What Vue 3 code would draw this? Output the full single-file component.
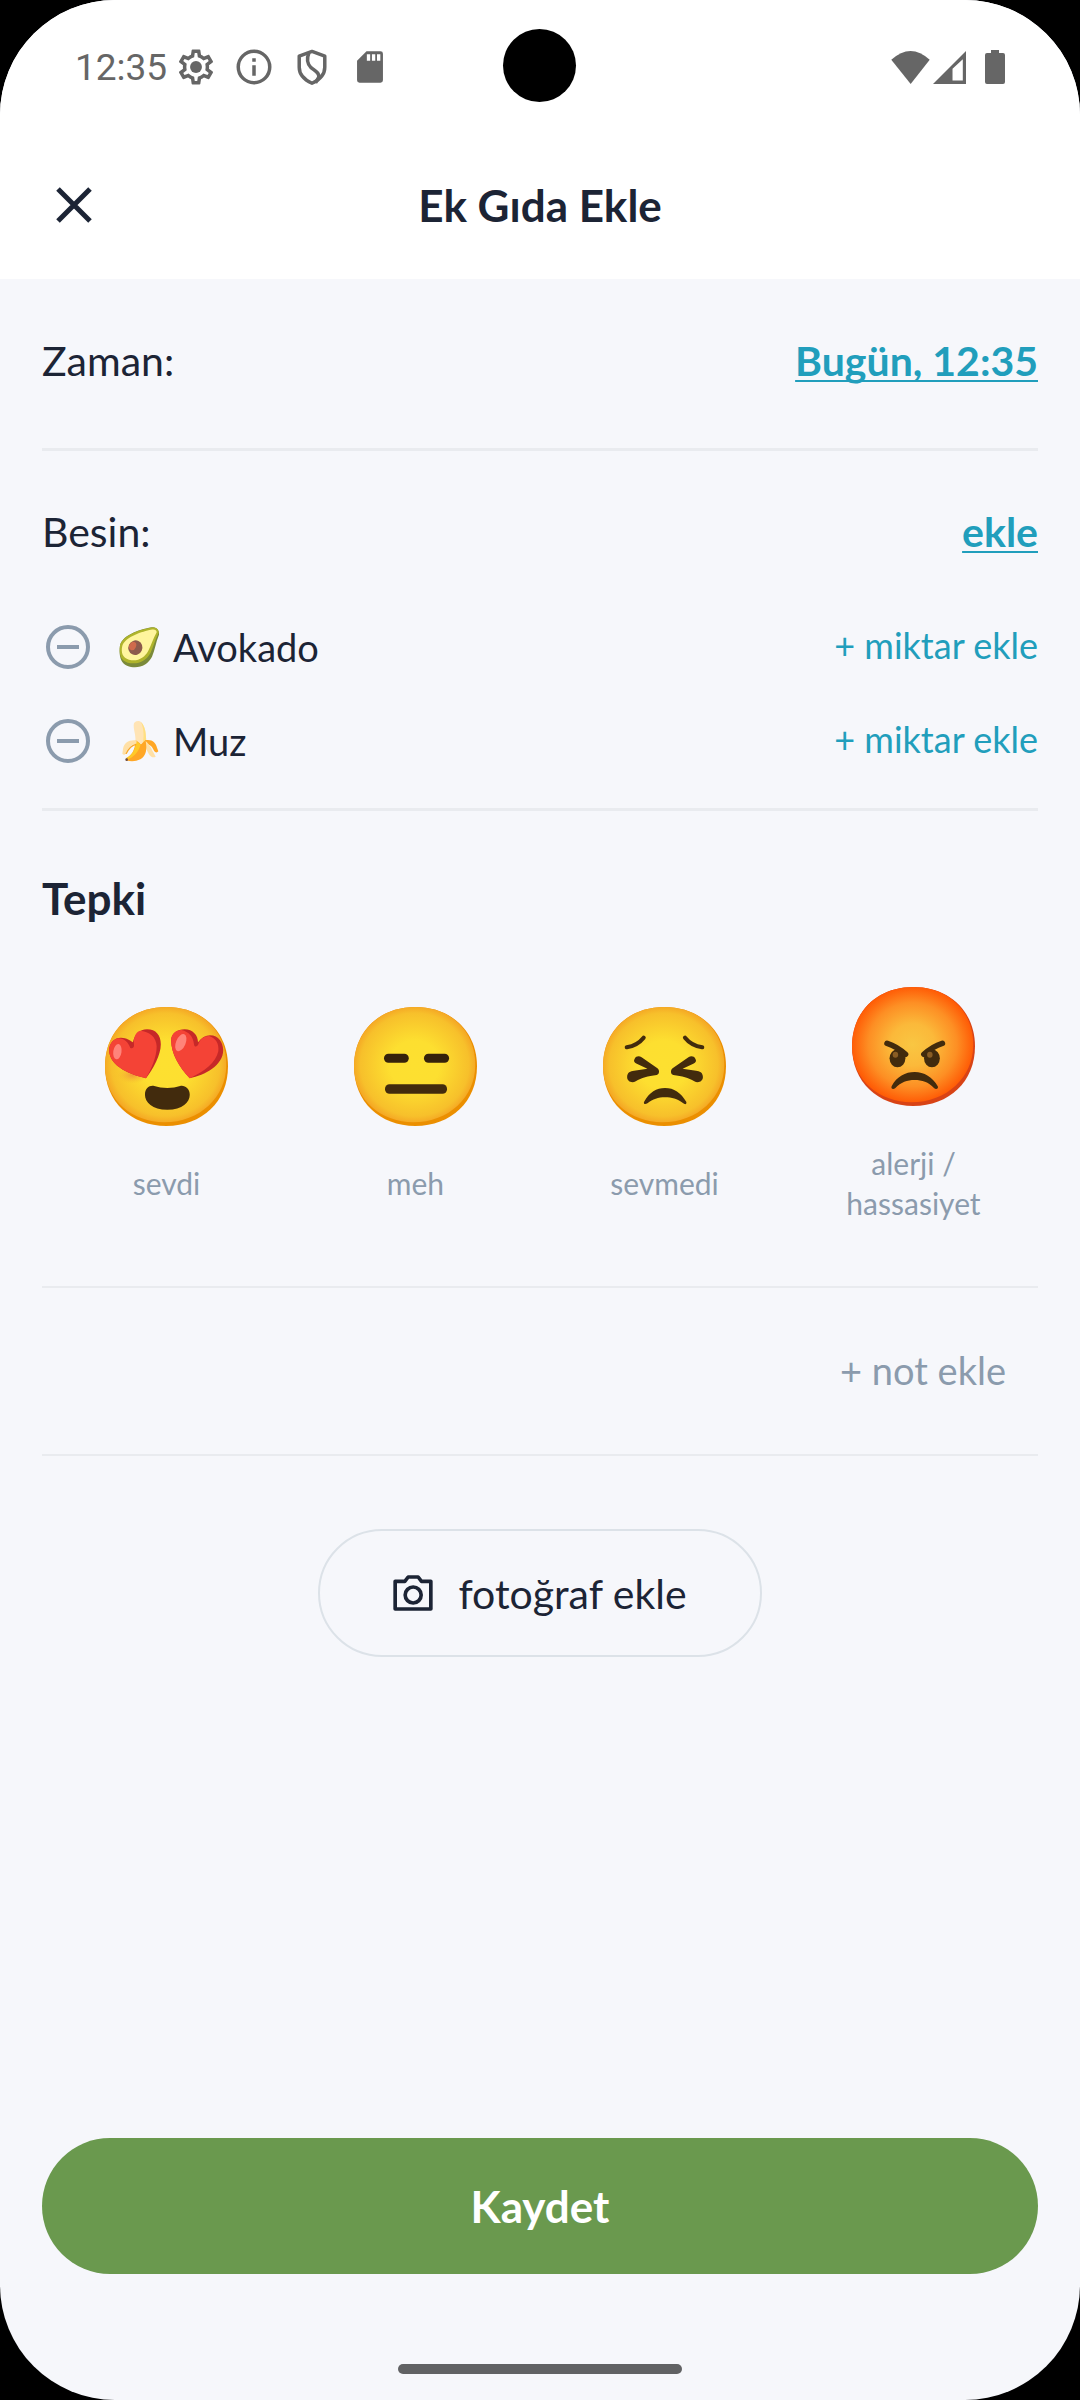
<template>
  <div class="screen">
    <header class="top">
      <div class="status-bar">
        <span class="clock">12:35</span>
        <div class="status-icons">
          <svg viewBox="0 0 24 24" aria-hidden="true">
            <path
              fill="currentColor"
              d="M19.43 12.98c.04-.32.07-.64.07-.98 0-.34-.03-.66-.07-.98l2.11-1.65c.19-.15.24-.42.12-.64l-2-3.46c-.09-.16-.26-.25-.44-.25-.06 0-.12.01-.17.03l-2.49 1c-.52-.4-1.08-.73-1.69-.98l-.38-2.65C14.46 2.18 14.25 2 14 2h-4c-.25 0-.46.18-.49.42l-.38 2.65c-.61.25-1.17.59-1.69.98l-2.49-1c-.06-.02-.12-.03-.18-.03-.17 0-.34.09-.43.25l-2 3.46c-.13.22-.07.49.12.64l2.11 1.65c-.04.32-.07.65-.07.98 0 .33.03.66.07.98l-2.11 1.65c-.19.15-.24.42-.12.64l2 3.46c.09.16.26.25.44.25.06 0 .12-.01.17-.03l2.49-1c.52.4 1.08.73 1.69.98l.38 2.65c.03.24.24.42.49.42h4c.25 0 .46-.18.49-.42l.38-2.65c.61-.25 1.17-.59 1.69-.98l2.49 1c.06.02.12.03.18.03.17 0 .34-.09.43-.25l2-3.46c.12-.22.07-.49-.12-.64l-2.11-1.65zm-1.98-1.71c.04.31.05.52.05.73 0 .21-.02.43-.05.73l-.14 1.13.89.7 1.08.84-.7 1.21-1.27-.51-1.04-.42-.9.68c-.43.32-.84.56-1.25.73l-1.06.43-.16 1.13-.2 1.35h-1.4l-.19-1.35-.16-1.13-1.06-.43c-.43-.18-.83-.41-1.23-.71l-.91-.7-1.06.43-1.27.51-.7-1.21 1.08-.84.89-.7-.14-1.13c-.03-.31-.05-.54-.05-.74s.02-.43.05-.73l.14-1.13-.89-.7-1.08-.84.7-1.21 1.27.51 1.04.42.9-.68c.43-.32.84-.56 1.25-.73l1.06-.43.16-1.13.2-1.35h1.39l.19 1.35.16 1.13 1.06.43c.43.18.83.41 1.23.71l.91.7 1.06-.43 1.27-.51.7 1.21-1.07.85-.89.7.14 1.13z"
            />
            <circle cx="12" cy="12" r="3.4" fill="currentColor" />
          </svg>
          <svg viewBox="0 0 24 24" aria-hidden="true">
            <circle cx="12" cy="12" r="9" fill="none" stroke="currentColor" stroke-width="2" />
            <path fill="currentColor" d="M11 7h2v2h-2zM11 11h2v6h-2z" />
          </svg>
          <svg viewBox="0 0 24 24" aria-hidden="true">
            <g fill="none" stroke="currentColor" stroke-width="2" stroke-linejoin="round">
              <path d="M12 3.1 19.3 5.8v6.4c0 4-2.8 7.1-7.3 9.1-4.5-2-7.3-5.1-7.3-9.1V5.8z" />
              <path d="M10.2 4C9 7 8.8 9.6 11.3 12.2C13.6 14.2 16.6 15.4 15.8 18L14 21" />
            </g>
          </svg>
          <svg viewBox="0 0 24 24" aria-hidden="true">
            <path
              fill="currentColor"
              fill-rule="evenodd"
              d="M10 3h8a1.4 1.4 0 0 1 1.4 1.4v15.2a1.4 1.4 0 0 1-1.4 1.4H6a1.4 1.4 0 0 1-1.4-1.4V8.4zM10.2 4.7v3.7h1.9V4.7zM13.1 4.7v3.7h1.9V4.7zM16 4.7v3.7h1.9V4.7z"
            />
          </svg>
        </div>
        <span class="camera-hole"></span>
        <div class="status-right">
          <svg class="wifi" viewBox="0 0 113 97" aria-hidden="true">
            <path fill="currentColor" d="M0 26Q57-26 113 26L57 97z" />
          </svg>
          <svg class="signal" viewBox="0 0 93 97" preserveAspectRatio="none" aria-hidden="true">
            <path fill="currentColor" fill-rule="evenodd" d="M93 0v97H0zM55 52v35h29V24z" />
          </svg>
          <svg class="battery" viewBox="0 0 20 34" aria-hidden="true">
            <path
              fill="currentColor"
              d="M6 0h8v3h4a2 2 0 0 1 2 2v27a2 2 0 0 1-2 2H2a2 2 0 0 1-2-2V5a2 2 0 0 1 2-2h4z"
            />
          </svg>
        </div>
      </div>

      <div class="app-bar">
        <button class="close" type="button" aria-label="Kapat">
          <svg viewBox="0 0 36 36" aria-hidden="true">
            <path d="M2 2l32 32M34 2L2 34" stroke="currentColor" stroke-width="5" />
          </svg>
        </button>
        <h1 class="title">Ek Gıda Ekle</h1>
      </div>
    </header>

    <main class="content">
      <section class="time-section">
        <div class="row">
          <span>Zaman:</span>
          <button class="link" type="button">Bugün, 12:35</button>
        </div>
      </section>

      <section class="food-section">
        <div class="row">
          <span>Besin:</span>
          <button class="link" type="button">ekle</button>
        </div>
        <ul class="foods">
          <li v-for="food in foods" :key="food.id" class="food">
            <button class="remove" type="button" :aria-label="food.name" @click="removeFood(food.id)">
              <svg viewBox="0 0 52 52" aria-hidden="true">
                <circle cx="26" cy="26" r="20" fill="none" stroke="currentColor" stroke-width="4" />
                <path d="M15 26h22" stroke="currentColor" stroke-width="4" />
              </svg>
            </button>
            <svg v-if="food.id === 'avocado'" class="food-icon" viewBox="26 34 120 126" aria-hidden="true">
              <path
                fill="#7b8a3a"
                d="M146 60C147 44 138 38 124 38C98 42 38 58 29 92C25 122 30 144 50 153C82 165 112 152 125 126C134 105 136 84 146 60z"
              />
              <path
                fill="#afb42b"
                d="M145 54C145 41 135 37 122 39C95 43 38 60 29 92C26 118 30 138 52 144C84 151 108 138 121 114C130 94 134 76 145 54z"
              />
              <path
                fill="#fff59d"
                d="M139 53C139 45 132 43 122 45C97 50 46 65 36 93C31 114 37 129 56 135C82 141 102 130 114 108C124 89 128 73 139 53z"
              />
              <ellipse cx="75" cy="99" rx="21" ry="22" fill="#8d5b4c" transform="rotate(25 75 99)" />
              <ellipse cx="67" cy="94" rx="10" ry="13" fill="#cf6b4c" transform="rotate(25 67 94)" />
            </svg>
            <svg v-else class="food-icon" viewBox="26 315 120 126" aria-hidden="true">
              <path fill="#ffe4b5" d="M70 330C70 318 86 315 93 322C106 336 107 358 108 384L75 386C78 364 70 348 70 330z" />
              <path fill="#ffe082" d="M92 321C106 336 107 358 108 384L98 382C102 358 99 338 92 321z" />
              <path
                fill="#ffa726"
                d="M104 376C124 371 137 383 140 398L144 409C140 414 135 413 131 407C125 393 117 386 104 388z"
              />
              <path fill="#ffe0a6" d="M105 378C117 386 123 401 129 412L136 425C130 430 120 425 115 416C108 405 104 393 105 378z" />
              <path
                fill="#ffa726"
                d="M76 375L92 388L105 376C112 402 107 424 90 433C76 440 61 440 47 436L47 430C62 423 74 408 76 375z"
              />
              <path fill="#ffc928" d="M77 378L91 388C86 410 70 428 49 435L47 430C64 420 76 406 77 378z" />
              <path fill="#ffe0a6" d="M79 376C56 373 41 383 38 402L36 416C40 421 45 420 47 413C55 395 64 388 78 386z" />
              <path fill="#f9a825" d="M78 386C62 389 52 401 45 417L49 417C57 401 66 392 78 390z" />
              <circle cx="49" cy="434" r="4" fill="#6d4c41" />
            </svg>
            <span class="food-name">{{ food.name }}</span>
            <button class="amount" type="button">+ miktar ekle</button>
          </li>
        </ul>
      </section>

      <section class="reaction-section">
        <h2 class="section-title">Tepki</h2>
        <div class="reactions">
          <button v-for="r in reactions" :key="r.id" class="reaction" type="button">
            <svg class="face" viewBox="0 0 357 357" preserveAspectRatio="none" aria-hidden="true">
              <defs>
                <radialGradient :id="'face-' + r.id" cx="50%" cy="50%" r="52%">
                  <stop v-for="s in r.stops" :key="s[0]" :offset="s[0]" :stop-color="s[1]" />
                </radialGradient>
                <radialGradient v-if="r.id === 'loved'" id="heart-shade">
                  <stop offset="0" stop-color="#ee8b3d" stop-opacity="0.8" />
                  <stop offset="1" stop-color="#f5b82e" stop-opacity="0" />
                </radialGradient>
              </defs>
              <path
                :fill="r.rim"
                d="M178 0C282 0 357 73 357 178C357 284 282 357 178 357C74 357 0 284 0 178C0 73 74 0 178 0z"
              />
              <path
                :fill="'url(#face-' + r.id + ')'"
                d="M178 0C282 0 352 73 352 174C352 270 275 346 172 346C82 346 0 282 0 178C0 73 74 0 178 0z"
              />

              <g v-if="r.id === 'loved'">
                <ellipse cx="80" cy="204" rx="46" ry="26" fill="url(#heart-shade)" />
                <path
                  fill="#c62828"
                  d="M12 130C12 105 30 91 47 92C62 93 75 100 81 106C85 85 100 67 122 67C148 67 162 85 162 112C162 145 140 185 119 214C80 205 12 180 12 130z"
                />
                <path
                  fill="#f44336"
                  d="M12 130C12 110 25 96 38 94C58 94 68 108 73 122C78 127 86 122 84 112C82 88 92 73 102 71C128 74 149 88 150 118C150 150 135 185 119 214C80 205 12 180 12 130z"
                />
                <ellipse cx="36" cy="134" rx="12" ry="23" fill="#ff847a" transform="rotate(8 36 134)" />
                <path
                  fill="#c62828"
                  d="M192 100C192 80 210 67 231 67C255 67 270 85 270 106C280 92 292 85 305 85C330 85 343 108 343 130C343 175 290 205 246 214C215 180 192 140 192 100z"
                />
                <path
                  fill="#f44336"
                  d="M192 100C192 80 208 68 222 69C244 74 256 90 258 110C259 121 267 121 271 112C276 95 288 87 302 87C322 93 331 110 329 132C322 168 288 192 246 214C215 180 192 140 192 100z"
                />
                <ellipse cx="220" cy="107" rx="14" ry="27" fill="#ff847a" transform="rotate(22 220 107)" />
                <path
                  fill="#422b0d"
                  d="M116 263C116 242 130 234 143 237C165 245 197 245 218 237C232 234 246 245 246 263C246 285 225 308 181 308C137 308 116 285 116 263z"
                />
              </g>

              <g v-else-if="r.id === 'meh'">
                <rect x="87" y="140" width="72" height="27" rx="13" fill="#35220b" />
                <rect x="203" y="140" width="73" height="27" rx="13" fill="#35220b" />
                <rect x="90" y="232" width="180" height="28" rx="13" fill="#422b0d" />
              </g>

              <g v-else-if="r.id === 'disliked'" fill="#422b0d">
                <g fill="none" stroke="#422b0d" stroke-width="12" stroke-linecap="round">
                  <path d="M69 121C90 117 108 105 118 92" />
                  <path d="M238 92C248 105 266 117 288 121" />
                </g>
                <path
                  d="M92 155C96 147 105 146 112 151L158 184C165 190 164 202 156 204C130 208 112 212 95 223C84 229 70 224 70 210C70 196 80 192 90 191L129 185L98 170C90 166 88 161 92 155z"
                />
                <path
                  transform="translate(360 0) scale(-1 1)"
                  d="M92 155C96 147 105 146 112 151L158 184C165 190 164 202 156 204C130 208 112 212 95 223C84 229 70 224 70 210C70 196 80 192 90 191L129 185L98 170C90 166 88 161 92 155z"
                />
                <path
                  d="M119 285C135 255 155 243 180 243C206 243 226 257 242 285C243 293 237 293 232 288C215 275 200 271 180 271C160 271 145 276 129 289C123 293 117 292 119 285z"
                />
              </g>

              <g v-else fill="#422b0d">
                <ellipse cx="132" cy="214" rx="23" ry="27" />
                <ellipse cx="232" cy="214" rx="23" ry="27" />
                <g fill="none" stroke="#422b0d" stroke-width="17" stroke-linecap="round">
                  <path d="M102 169Q130 178 155 202" />
                  <path d="M262 169Q234 178 209 202" />
                </g>
                <ellipse cx="126" cy="203" rx="8" ry="9" fill="#8a5d24" />
                <ellipse cx="226" cy="203" rx="8" ry="9" fill="#8a5d24" />
                <path
                  d="M115 298C130 268 155 255 182 255C209 255 234 270 249 298C252 306 243 309 238 303C222 285 203 279 182 279C160 279 142 286 126 303C120 309 112 306 115 298z"
                />
              </g>
            </svg>
            <span class="reaction-label">{{ r.label }}</span>
          </button>
        </div>
      </section>

      <section class="note-section">
        <button class="note" type="button">+ not ekle</button>
      </section>

      <button class="photo" type="button">
        <svg viewBox="288 217 119 108" aria-hidden="true">
          <path
            fill="none"
            stroke="currentColor"
            stroke-width="11"
            stroke-linejoin="round"
            d="M294 236H323L333 223H363L373 236H401V319H294z"
          />
          <circle cx="348" cy="277" r="24" fill="none" stroke="currentColor" stroke-width="11" />
        </svg>
        fotoğraf ekle
      </button>
    </main>

    <footer class="footer">
      <button class="save" type="button">Kaydet</button>
      <span class="home-bar"></span>
    </footer>
  </div>
</template>

<script setup>
import { ref } from 'vue'

const foods = ref([
  { id: 'avocado', name: 'Avokado' },
  { id: 'banana', name: 'Muz' }
])

const yellow = [
  [0, '#fde030'],
  [0.4, '#fddf30'],
  [0.86, '#f7c02b'],
  [1, '#f4a223']
]

const red = [
  [0, '#f9c642'],
  [0.35, '#fbb93a'],
  [0.7, '#fd8f24'],
  [1, '#ff5502']
]

const reactions = [
  { id: 'loved', label: 'sevdi', rim: '#eb8f00', stops: yellow },
  { id: 'meh', label: 'meh', rim: '#eb8f00', stops: yellow },
  { id: 'disliked', label: 'sevmedi', rim: '#eb8f00', stops: yellow },
  { id: 'allergy', label: 'alerji / hassasiyet', rim: '#d84315', stops: red }
]

function removeFood(id) {
  foods.value = foods.value.filter(f => f.id !== id)
}
</script>

<style>
body {
  background: #000;
}
</style>

<style scoped>
.screen {
  display: flex;
  flex-direction: column;
  min-height: 100vh;
  border-radius: 115px;
  overflow: hidden;
  background: #f6f7fb;
  color: #1c2435;
  font-family: Lato, 'Open Sans', sans-serif;
}

button {
  margin: 0;
  padding: 0;
  border: 0;
  background: none;
  color: inherit;
  font: inherit;
  cursor: pointer;
}

svg {
  display: block;
  flex: none;
}

.top {
  background: #fff;
}

.status-bar {
  position: relative;
  display: flex;
  align-items: center;
  box-sizing: border-box;
  height: 130px;
  padding: 4px 75px 0;
  color: #666;
}

.clock {
  font-family: Roboto, sans-serif;
  font-size: 37px;
}

.status-icons {
  display: flex;
  gap: 16px;
  margin-left: 8px;
}

.status-icons svg {
  width: 42px;
  height: 42px;
}

.camera-hole {
  position: absolute;
  top: 29px;
  left: 50%;
  width: 73px;
  height: 73px;
  margin-left: -37px;
  border-radius: 50%;
  background: #000;
}

.status-right {
  display: flex;
  align-items: center;
  margin-left: auto;
}

.wifi {
  width: 39px;
  height: 33px;
}

.signal {
  width: 33px;
  height: 33px;
  margin: 0 19px 0 3px;
}

.battery {
  width: 20px;
  height: 34px;
}

.app-bar {
  display: grid;
  grid-template-columns: 1fr auto 1fr;
  align-items: center;
  box-sizing: border-box;
  height: 149px;
  padding: 0 56px;
}

.close {
  justify-self: start;
}

.close svg {
  width: 36px;
  height: 36px;
}

.title,
.section-title {
  margin: 0;
  font-size: 44px;
  font-weight: 700;
  line-height: 64px;
}

.content {
  display: flex;
  flex-direction: column;
  padding: 0 42px;
}

.row {
  display: flex;
  justify-content: space-between;
  font-size: 41px;
  line-height: 64px;
}

.link {
  color: #219ebc;
  font-weight: 700;
  text-decoration: underline;
  text-decoration-thickness: 2px;
  text-decoration-skip-ink: none;
  text-underline-offset: 4px;
}

.time-section {
  padding: 50px 0 55px;
  border-bottom: 3px solid #e9ebef;
}

.food-section {
  padding: 49px 0 20px;
  border-bottom: 3px solid #e9ebef;
}

.foods {
  margin: 36px 0 0;
  padding: 0;
  list-style: none;
}

.food {
  display: flex;
  align-items: center;
  height: 94px;
}

.remove {
  color: #8b9bad;
}

.remove svg {
  width: 52px;
  height: 52px;
}

.food-icon {
  width: 40px;
  height: 42px;
  margin: 0 14px 0 25px;
}

.food-name {
  font-size: 38px;
}

.amount {
  margin-left: auto;
  padding-bottom: 4px;
  color: #219ebc;
  font-size: 36px;
}

.reaction-section {
  padding: 55px 0 63px;
  border-bottom: 2px solid #e9ebef;
}

.reactions {
  display: grid;
  grid-template-columns: repeat(4, 1fr);
  margin-top: 57px;
}

.reaction {
  display: flex;
  flex-direction: column;
  align-items: center;
  justify-content: center;
  gap: 37px;
}

.face {
  width: 123px;
  height: 119px;
}

.reaction-label {
  max-width: 160px;
  color: #8b9bad;
  font-size: 30px;
  line-height: 40px;
}

.note-section {
  display: flex;
  justify-content: flex-end;
  padding: 50px 32px 52px;
  border-bottom: 2px solid #e9ebef;
}

.note {
  color: #8b9bad;
  font-size: 38px;
  line-height: 64px;
}

.photo {
  display: flex;
  align-items: center;
  align-self: center;
  gap: 25px;
  box-sizing: border-box;
  height: 128px;
  margin-top: 73px;
  padding: 0 73px;
  border: 2px solid #dce2e8;
  border-radius: 64px;
  font-size: 41px;
}

.photo svg {
  width: 40px;
  height: 36px;
}

.footer {
  display: flex;
  flex-direction: column;
  align-items: center;
  margin-top: auto;
  padding: 40px 42px 26px;
}

.save {
  align-self: stretch;
  height: 136px;
  border-radius: 68px;
  background: #6a994e;
  color: #fff;
  font-size: 44px;
  font-weight: 700;
}

.home-bar {
  width: 284px;
  height: 10px;
  margin-top: 90px;
  border-radius: 5px;
  background: #616264;
}
</style>
